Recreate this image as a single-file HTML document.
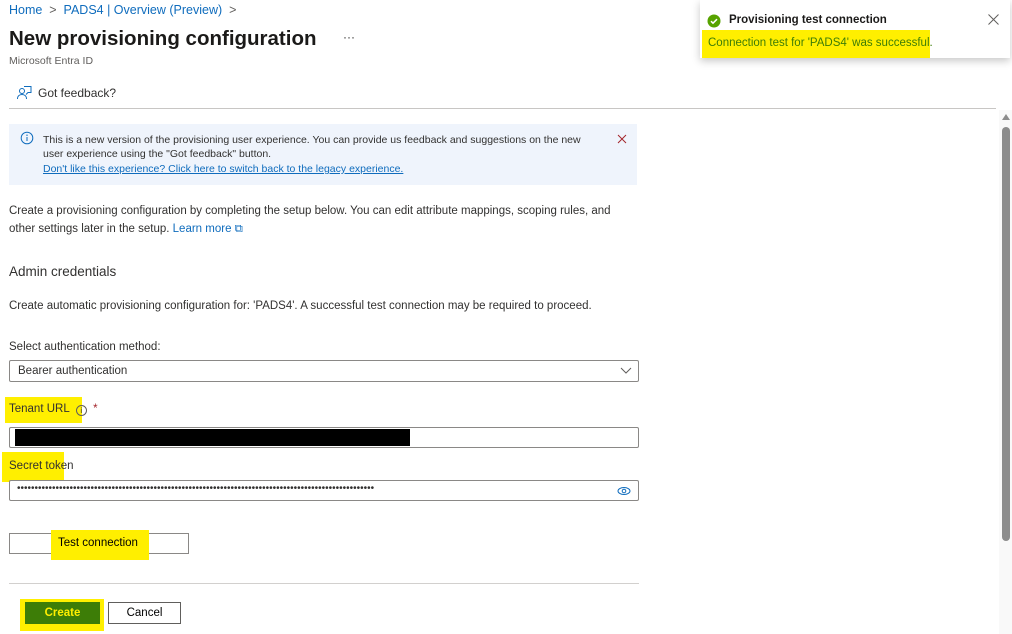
<!DOCTYPE html>
<html><head><meta charset="utf-8"><style>
*{margin:0;padding:0;box-sizing:border-box}
body{width:1012px;height:634px;overflow:hidden;background:#fff;font-family:"Liberation Sans",sans-serif;color:#323130;position:relative;font-size:11.5px}
.a{position:absolute;white-space:nowrap}
.hl{background:#ffef00}
.inp{position:absolute;border:1px solid #8a8886;background:#fff;border-radius:2px}
</style></head><body>
<div class="a" style="left:9px;top:3px;font-size:12.5px;color:#0f6cbd">Home <span style="color:#605e5c">&nbsp;&gt;&nbsp;</span> PADS4 | Overview (Preview) <span style="color:#605e5c">&nbsp;&gt;</span></div>
<div class="a" style="left:9px;top:27px;font-size:20.5px;color:#1b1a19;font-weight:600">New provisioning configuration</div>
<div class="a" style="left:343px;top:30px;font-size:12px;color:#323130">···</div>
<div class="a" style="left:9px;top:55px;font-size:10.5px;color:#605e5c">Microsoft Entra ID</div>
<svg class="a" style="left:16px;top:85px" width="16" height="16" viewBox="0 0 16 16" fill="none" stroke="#0f6cbd" stroke-width="1"><circle cx="6" cy="6" r="2.5"/><path d="M1.5 14c0-3 2-4.5 4.5-4.5S10.5 11 10.5 14M8 1.5h7v6h-3l-2 2"/></svg>
<div class="a" style="left:38px;top:86px;font-size:12px">Got feedback?</div>
<div class="a" style="left:9px;top:108px;width:987px;height:1px;background:#c8c6c4"></div>
<div class="a" style="left:9px;top:124px;width:628px;height:61px;background:#eff4fc"></div>
<svg class="a" style="left:20px;top:131px" width="14" height="14" viewBox="0 0 14 14"><circle cx="7" cy="7" r="5.8" fill="none" stroke="#0f6cbd"/><path d="M7 6v4" stroke="#0f6cbd"/><circle cx="7" cy="4.2" r=".7" fill="#0f6cbd"/></svg>
<div class="a" style="left:43px;top:133px;font-size:10.5px;line-height:14px">This is a new version of the provisioning user experience. You can provide us feedback and suggestions on the new<br>user experience using the "Got feedback" button.</div>
<div class="a" style="left:43px;top:163px;font-size:10.5px;color:#0f6cbd;text-decoration:underline">Don't like this experience? Click here to switch back to the legacy experience.</div>
<svg class="a" style="left:617px;top:134px" width="10" height="10"><path d="M1 1l8 8M9 1l-8 8" stroke="#a4262c" stroke-width="1"/></svg>
<div class="a" style="left:9px;top:202px;font-size:11.5px;line-height:18px">Create a provisioning configuration by completing the setup below. You can edit attribute mappings, scoping rules, and<br>other settings later in the setup. <span style="color:#0f6cbd">Learn more ⧉</span></div>
<div class="a" style="left:9px;top:264px;font-size:13.5px">Admin credentials</div>
<div class="a" style="left:9px;top:300px;font-size:11.5px">Create automatic provisioning configuration for: 'PADS4'. A successful test connection may be required to proceed.</div>
<div class="a" style="left:9px;top:341px;font-size:11.5px">Select authentication method:</div>
<div class="inp" style="left:9px;top:360px;width:630px;height:22px"><span class="a" style="left:8px;top:4px;font-size:11.5px">Bearer authentication</span><svg class="a" style="left:610px;top:6px" width="12" height="8"><path d="M1 1l5 5 5-5" fill="none" stroke="#605e5c"/></svg></div>
<div class="a hl" style="left:5px;top:397px;width:77px;height:26px"></div>
<div class="a" style="left:9px;top:403px;font-size:11.5px">Tenant URL &nbsp;<span style="display:inline-block;width:11px;height:11px;border:1px solid #605e5c;border-radius:50%;font-size:8px;text-align:center;line-height:9px;vertical-align:-1px">i</span> &nbsp;<span style="color:#a4262c">*</span></div>
<div class="inp" style="left:9px;top:427px;width:630px;height:21px"><div class="a" style="left:5px;top:1px;width:395px;height:17px;background:#000"></div></div>
<div class="a hl" style="left:2px;top:452px;width:62px;height:30px"></div>
<div class="a" style="left:9px;top:460px;font-size:11.5px">Secret token</div>
<div class="inp" style="left:9px;top:480px;width:630px;height:21px;overflow:hidden"><span class="a" style="left:7px;top:2px;font-size:10px;letter-spacing:0">••••••••••••••••••••••••••••••••••••••••••••••••••••••••••••••••••••••••••••••••••••••••••••••••••••••</span><svg class="a" style="left:607px;top:5px" width="14" height="10"><ellipse cx="7" cy="5" rx="6" ry="3.5" fill="#fff" stroke="#0f6cbd"/><circle cx="7" cy="5" r="1.8" fill="none" stroke="#0f6cbd"/></svg></div>
<div class="a" style="left:9px;top:533px;width:180px;height:21px;border:1px solid #8a8886;background:#fff"></div>
<div class="a hl" style="left:51px;top:530px;width:98px;height:30px"></div>
<div class="a" style="left:58px;top:537px;font-size:11.5px;color:#000">Test connection</div>
<div class="a" style="left:9px;top:583px;width:630px;height:1px;background:#d2d0ce"></div>
<div class="a hl" style="left:20px;top:599px;width:84px;height:32px"></div>
<div class="a" style="left:25px;top:602px;width:75px;height:22px;background:#3d7d07;color:#ffef00;font-size:11.5px;font-weight:bold;text-align:center;line-height:22px">Create</div>
<div class="a" style="left:108px;top:602px;width:73px;height:22px;border:1px solid #605e5c;font-size:11.5px;text-align:center;line-height:20px;color:#000">Cancel</div>
<div class="a" style="left:999px;top:110px;width:13px;height:524px;background:#f9f9f9"></div>
<div class="a" style="left:1002px;top:114px;width:0;height:0;border-left:4px solid transparent;border-right:4px solid transparent;border-bottom:6px solid #8c8c8c"></div>
<div class="a" style="left:1002px;top:127px;width:8px;height:414px;background:#8c8c8c;border-radius:4px"></div>
<div class="a" style="left:700px;top:0;width:310px;height:58px;background:#fff;box-shadow:0 3px 8px rgba(0,0,0,.22)"></div>
<svg class="a" style="left:707px;top:14px" width="14" height="14"><circle cx="7" cy="7" r="6.5" fill="#57a300"/><path d="M4 7.2l2 2 4-4" fill="none" stroke="#fff" stroke-width="1.5"/></svg>
<div class="a" style="left:729px;top:14px;font-size:11.5px;font-weight:600;color:#1b1a19">Provisioning test connection</div>
<svg class="a" style="left:988px;top:14px" width="11" height="11"><path d="M.5 .5l10 10M10.5 .5l-10 10" stroke="#605e5c" stroke-width="1"/></svg>
<div class="a hl" style="left:702px;top:30px;width:228px;height:28px"></div>
<div class="a" style="left:708px;top:37px;font-size:11.5px;color:#3d7d07">Connection test for 'PADS4' was successful.</div>
</body></html>
